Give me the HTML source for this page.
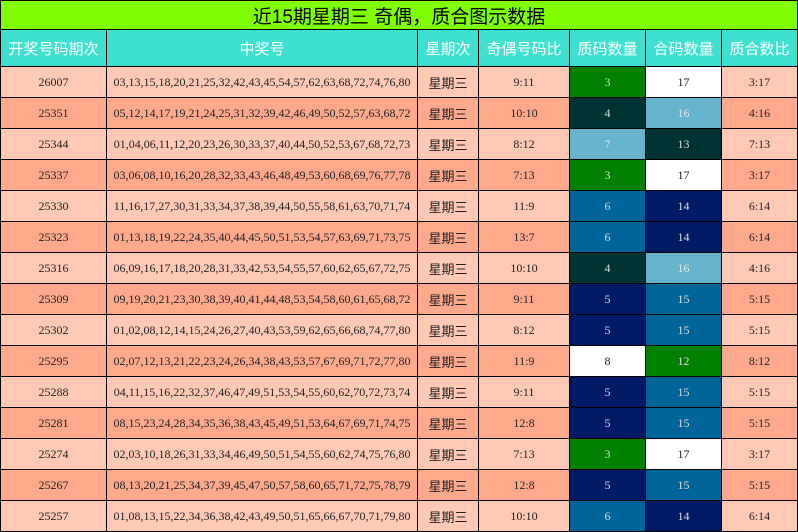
<!DOCTYPE html>
<html><head><meta charset="utf-8"><style>
html,body{margin:0;padding:0;background:#fff}
.g{display:grid;width:796px;padding:1px;background:#000;gap:1px;
grid-template-columns:105px 310px 60px 90px 75px 75px 75px;
grid-template-rows:28px 36px repeat(15,30px);}
.g div{display:flex;align-items:center;justify-content:center;font-family:"Liberation Serif","Noto Serif CJK SC",serif;font-size:12px;color:#222;white-space:nowrap;overflow:hidden}
.t{grid-column:1/8;background:#7fff00;font-family:"Liberation Sans","Noto Sans CJK SC",sans-serif!important;font-size:19px!important;color:#000!important}
.h{background:#40e0d0;color:#fff!important;font-family:"Liberation Sans","Noto Sans CJK SC",sans-serif!important;font-size:15px!important}
.a{background:#ffc9b5}.b{background:#ffa98c}
.w{font-family:"Liberation Sans","Noto Sans CJK SC",sans-serif!important;font-size:13px!important}
.G{background:#008000;color:#ddd!important}.D{background:#003333;color:#ddd!important}
.L{background:#66b3cc;color:#e8e8e8!important}.B{background:#006699;color:#ddd!important}
.N{background:#001a66;color:#ddd!important}.W{background:#fff}
</style></head><body><div class="g">
<div class="t">近15期星期三 奇偶，质合图示数据</div>
<div class="h">开奖号码期次</div><div class="h">中奖号</div><div class="h">星期次</div><div class="h">奇偶号码比</div><div class="h">质码数量</div><div class="h">合码数量</div><div class="h">质合数比</div>

<div class="a">26007</div><div class="a">03,13,15,18,20,21,25,32,42,43,45,54,57,62,63,68,72,74,76,80</div><div class="a w">星期三</div><div class="a">9:11</div><div class="G">3</div><div class="W">17</div><div class="a">3:17</div>
<div class="b">25351</div><div class="b">05,12,14,17,19,21,24,25,31,32,39,42,46,49,50,52,57,63,68,72</div><div class="b w">星期三</div><div class="b">10:10</div><div class="D">4</div><div class="L">16</div><div class="b">4:16</div>
<div class="a">25344</div><div class="a">01,04,06,11,12,20,23,26,30,33,37,40,44,50,52,53,67,68,72,73</div><div class="a w">星期三</div><div class="a">8:12</div><div class="L">7</div><div class="D">13</div><div class="a">7:13</div>
<div class="b">25337</div><div class="b">03,06,08,10,16,20,28,32,33,43,46,48,49,53,60,68,69,76,77,78</div><div class="b w">星期三</div><div class="b">7:13</div><div class="G">3</div><div class="W">17</div><div class="b">3:17</div>
<div class="a">25330</div><div class="a">11,16,17,27,30,31,33,34,37,38,39,44,50,55,58,61,63,70,71,74</div><div class="a w">星期三</div><div class="a">11:9</div><div class="B">6</div><div class="N">14</div><div class="a">6:14</div>
<div class="b">25323</div><div class="b">01,13,18,19,22,24,35,40,44,45,50,51,53,54,57,63,69,71,73,75</div><div class="b w">星期三</div><div class="b">13:7</div><div class="B">6</div><div class="N">14</div><div class="b">6:14</div>
<div class="a">25316</div><div class="a">06,09,16,17,18,20,28,31,33,42,53,54,55,57,60,62,65,67,72,75</div><div class="a w">星期三</div><div class="a">10:10</div><div class="D">4</div><div class="L">16</div><div class="a">4:16</div>
<div class="b">25309</div><div class="b">09,19,20,21,23,30,38,39,40,41,44,48,53,54,58,60,61,65,68,72</div><div class="b w">星期三</div><div class="b">9:11</div><div class="N">5</div><div class="B">15</div><div class="b">5:15</div>
<div class="a">25302</div><div class="a">01,02,08,12,14,15,24,26,27,40,43,53,59,62,65,66,68,74,77,80</div><div class="a w">星期三</div><div class="a">8:12</div><div class="N">5</div><div class="B">15</div><div class="a">5:15</div>
<div class="b">25295</div><div class="b">02,07,12,13,21,22,23,24,26,34,38,43,53,57,67,69,71,72,77,80</div><div class="b w">星期三</div><div class="b">11:9</div><div class="W">8</div><div class="G">12</div><div class="b">8:12</div>
<div class="a">25288</div><div class="a">04,11,15,16,22,32,37,46,47,49,51,53,54,55,60,62,70,72,73,74</div><div class="a w">星期三</div><div class="a">9:11</div><div class="N">5</div><div class="B">15</div><div class="a">5:15</div>
<div class="b">25281</div><div class="b">08,15,23,24,28,34,35,36,38,43,45,49,51,53,64,67,69,71,74,75</div><div class="b w">星期三</div><div class="b">12:8</div><div class="N">5</div><div class="B">15</div><div class="b">5:15</div>
<div class="a">25274</div><div class="a">02,03,10,18,26,31,33,34,46,49,50,51,54,55,60,62,74,75,76,80</div><div class="a w">星期三</div><div class="a">7:13</div><div class="G">3</div><div class="W">17</div><div class="a">3:17</div>
<div class="b">25267</div><div class="b">08,13,20,21,25,34,37,39,45,47,50,57,58,60,65,71,72,75,78,79</div><div class="b w">星期三</div><div class="b">12:8</div><div class="N">5</div><div class="B">15</div><div class="b">5:15</div>
<div class="a">25257</div><div class="a">01,08,13,15,22,34,36,38,42,43,49,50,51,65,66,67,70,71,79,80</div><div class="a w">星期三</div><div class="a">10:10</div><div class="B">6</div><div class="N">14</div><div class="a">6:14</div>
</div></body></html>
